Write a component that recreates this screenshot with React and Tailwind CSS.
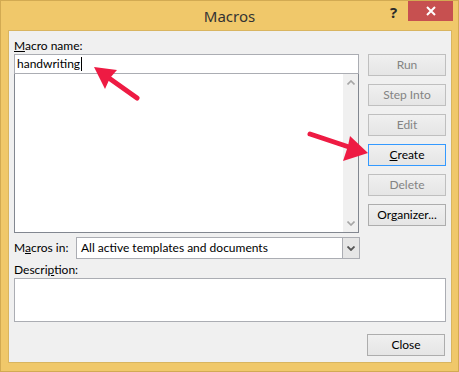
export default function App() {
  const btn = 'h-[22px] w-[78px] border text-[12px] flex items-center justify-center bg-gradient-to-b from-[#F0F0F0] to-[#E5E5E5]'
  return (
    <div className="relative w-[459px] h-[372px] bg-[#F0C86A] border border-[#D2AA52] flex flex-col text-black font-['Lato','Segoe_UI',sans-serif] text-[12px] select-none">
      {/* title bar */}
      <div className="relative h-[29px] flex items-center justify-center">
        <span className="text-[15px] text-[#333] leading-none mt-[1px] font-['Noto_Sans',sans-serif]">Macros</span>
        <span className="absolute left-[389px] top-[4px] text-[15px] font-bold text-[#2b2b2b] leading-none font-['Noto_Sans',sans-serif]">?</span>
        <div className="absolute left-[407px] top-[0px] w-[45px] h-[20px] bg-[#C75050] flex items-center justify-center">
          <svg width="10" height="10" viewBox="0 0 10 10">
            <path d="M1 1 L9 9 M9 1 L1 9" stroke="white" strokeWidth="2" />
          </svg>
        </div>
      </div>

      {/* client area */}
      <div className="flex-1 ml-[7px] mr-[6px] mb-[8px] bg-[#F0F0F0] border border-[#D9B560] pl-[5px] pr-[5px] pt-[7px] flex flex-col">
        <div className="flex">
          <div className="w-[345px] flex flex-col">
            <div className="h-[16px] leading-[16px]"><u>M</u>acro name:</div>
            <div className="h-[20px] bg-white border border-[#ABADB3] flex items-center pl-[2px]">
              <span>handwriting</span>
              <span className="w-[1px] h-[14px] bg-black ml-[1px]" />
            </div>
            <div className="h-[159px] bg-white border border-[#828790] border-t-0 flex justify-end">
              <div className="w-[15px] bg-[#F0F0F0] flex flex-col items-center justify-between py-[6px]">
                <svg width="8" height="5" viewBox="0 0 8 5"><path d="M0.5 4.5 L4 1 L7.5 4.5" stroke="#A6A6A6" strokeWidth="1.6" fill="none" /></svg>
                <svg width="8" height="5" viewBox="0 0 8 5"><path d="M0.5 0.5 L4 4 L7.5 0.5" stroke="#A6A6A6" strokeWidth="1.6" fill="none" /></svg>
              </div>
            </div>
          </div>
          <div className="ml-[9px] mt-[16px] flex flex-col gap-[8px]">
            <div className={`${btn} border-[#BFBFBF] text-[#838383]`}>Run</div>
            <div className={`${btn} border-[#BFBFBF] text-[#838383]`}>Step Into</div>
            <div className={`${btn} border-[#BFBFBF] text-[#838383]`}>Edit</div>
            <div className={`${btn} border-[#3399FF]`}><span><u>C</u>reate</span></div>
            <div className={`${btn} border-[#BFBFBF] text-[#838383]`}>Delete</div>
            <div className={`${btn} border-[#ADADAD]`}><span>Or<u>g</u>anizer...</span></div>
          </div>
        </div>

        <div className="flex items-center mt-[4px]">
          <div className="w-[62px]">M<u>a</u>cros in:</div>
          <div className="w-[284px] h-[22px] bg-white border border-[#ABADB3] flex items-center">
            <span className="flex-1 pl-[4px]">All active templates and documents</span>
            <div className="w-[17px] h-full bg-[#E6E6E6] border-l border-[#ABADB3] flex items-center justify-center">
              <svg width="8" height="5" viewBox="0 0 8 5"><path d="M0.5 0.5 L4 4 L7.5 0.5" stroke="#555" strokeWidth="1.8" fill="none" /></svg>
            </div>
          </div>
        </div>

        <div className="h-[16px] leading-[16px] mt-[3px]">Descri<u>p</u>tion:</div>
        <div className="h-[44px] bg-white border border-[#ABADB3]" />

        <div className="flex justify-end mt-[12px] mr-[1px]">
          <div className={`${btn} w-[75px] border-[#ADADAD]`}>Close</div>
        </div>
      </div>

      {/* annotation arrows */}
      <svg className="absolute left-[-1px] top-[-1px] pointer-events-none" width="459" height="372">
        <line x1="137" y1="98" x2="106" y2="76" stroke="#EE1B43" strokeWidth="5" strokeLinecap="round" />
        <polygon points="94,67 117,70 110,78 105,89" fill="#EE1B43" />
        <line x1="310" y1="134" x2="352" y2="148" stroke="#EE1B43" strokeWidth="5" strokeLinecap="round" />
        <polygon points="368,153 350,136 348,146 343,161" fill="#EE1B43" />
      </svg>
    </div>
  )
}
